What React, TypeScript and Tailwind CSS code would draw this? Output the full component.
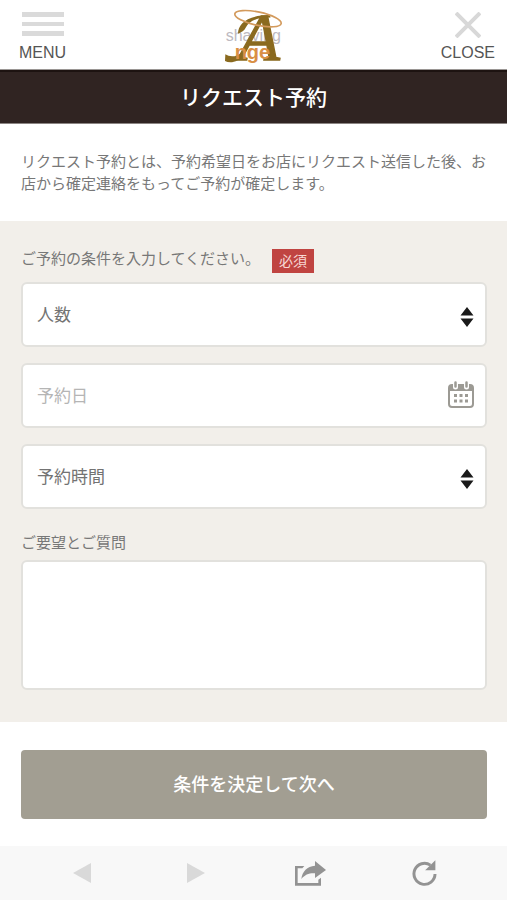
import type { ReactNode } from "react";

function Logo() {
  return (
    <svg
      viewBox="42 21 180 171"
      className="h-[57px] w-[60px] overflow-visible"
      role="img"
      aria-label="shaving Ange"
    >
      <text x="50" y="119" fontSize="48" fill="#bdb9c0" fontFamily="Liberation Sans, Arial, sans-serif">
        shaving
      </text>
      <text
        x="88"
        y="176"
        fontSize="204"
        fontStyle="italic"
        fill="#8a6a1f"
        stroke="#8a6a1f"
        strokeWidth="4"
        fontFamily="Liberation Serif, Times New Roman, serif"
      >
        A
      </text>
      {/* flourishes */}
      <path d="M87 98C87 68 116 42 184 42L184 50C142 48 120 62 110 80C106 89 98 93 87 98Z" fill="#8a6a1f" />
      <path d="M49 160C62 168 82 170 100 152L108 158C88 184 64 188 48 180Z" fill="#8a6a1f" />
      <ellipse
        cx="147"
        cy="53"
        rx="71"
        ry="20"
        transform="rotate(12 147 53)"
        fill="none"
        stroke="#d39a5c"
        strokeWidth="5"
      />
      <text
        x="77"
        y="175"
        fontSize="60"
        fontWeight="700"
        fill="#d98f45"
        fontFamily="Liberation Sans, Arial, sans-serif"
      >
        nge
      </text>
    </svg>
  );
}

function SelectField({ id, label }: { id: string; label: string }) {
  return (
    <div className="relative">
      <select
        id={id}
        aria-label={label}
        defaultValue=""
        className="block h-[65px] w-full appearance-none rounded-md border-2 border-[#e2e1dd] bg-white px-3.5 pt-0.5 text-[17px] text-[#737373]"
      >
        <option value="">{label}</option>
      </select>
      <svg
        viewBox="0 0 14 20"
        className="pointer-events-none absolute top-[25px] right-[13px] h-5 w-3.5 fill-[#1a1a1a]"
        aria-hidden="true"
      >
        <path d="M7 0L13.500 8.500H.5ZM7 20L.5 11.500h13Z" />
      </svg>
    </div>
  );
}

function ToolButton({ label, children }: { label: string; children: ReactNode }) {
  return (
    <button type="button" aria-label={label} className="flex h-full flex-1 items-center justify-center">
      {children}
    </button>
  );
}

export default function App() {
  return (
    <div className="flex min-h-screen flex-col bg-white font-['Liberation_Sans','Noto_Sans_CJK_JP',sans-serif] text-[#777]">
      <header className="flex h-[70px] items-start justify-between border-b border-[#9a9694] pr-3 pl-[19px]">
        <button type="button" className="flex flex-col items-center pt-3 text-base leading-5 text-[#555]">
          <svg viewBox="0 0 42 26" className="h-[26px] w-[42px] fill-[#dadada]" aria-hidden="true">
            <path d="M0 0h42v5H0zM0 10h42v4H0zM0 19h42v5H0z" />
          </svg>
          <span className="mt-[5px]">MENU</span>
        </button>
        <div className="pt-2">
          <Logo />
        </div>
        <button type="button" className="flex flex-col items-center pt-3 text-base leading-5 text-[#555]">
          <svg viewBox="0 0 26 26" className="size-[26px] stroke-[#d8d8d8]" aria-hidden="true">
            <path d="M1 1L25 25M25 1L1 25" strokeWidth="4" />
          </svg>
          <span className="mt-[5px]">CLOSE</span>
        </button>
      </header>

      <h1 className="flex h-[54px] items-center justify-center border-t-2 border-b border-t-[#1d1311] border-b-[#8b8583] bg-[#302422] text-[21px] font-medium text-white">
        リクエスト予約
      </h1>

      <p className="pt-[27px] pr-5 pb-[26px] pl-[21px] text-[15px] leading-[22px]">
        リクエスト予約とは、予約希望日をお店にリクエスト送信した後、お店から確定連絡をもってご予約が確定します。
      </p>

      <form className="flex flex-col">
        <div className="bg-[#f2efea] pt-7 pr-5 pb-8 pl-[21px]">
          <div className="mb-[9px] flex items-start">
            <label htmlFor="people" className="w-[251px] text-[15px] leading-5">
              ご予約の条件を入力してください。
            </label>
            <span className="bg-[#c04441] px-[7px] text-sm leading-6 text-[#f8d9d5]">必須</span>
          </div>

          <div className="flex flex-col gap-4">
            <SelectField id="people" label="人数" />
            <div className="relative">
              <input
                type="text"
                aria-label="予約日"
                placeholder="予約日"
                className="block h-[65px] w-full rounded-md border-2 border-[#e2e1dd] bg-white px-3.5 pt-0.5 text-[17px] placeholder:text-[#b5b5b5]"
              />
              <svg
                viewBox="0 0 26 28"
                className="pointer-events-none absolute top-[18px] right-[13px] h-7 w-[26px]"
                aria-hidden="true"
              >
                <rect x="1" y="4" width="24" height="22" rx="3" fill="none" stroke="#9c9a94" strokeWidth="2" />
                <path d="M1 5h24v5H1z" fill="#9c9a94" />
                <path d="M7.500 2v4M18.500 2v4" stroke="#fff" strokeWidth="5" strokeLinecap="round" />
                <path d="M7.500 1.500v4M18.500 1.500v4" stroke="#9c9a94" strokeWidth="2.500" strokeLinecap="round" />
                <path
                  d="M6 13h3v3H6zM11.500 13h3v3h-3zM17 13h3v3h-3zM6 18.500h3v3H6zM11.500 18.500h3v3h-3zM17 18.500h3v3h-3z"
                  fill="#9c9a94"
                />
              </svg>
            </div>
            <SelectField id="time" label="予約時間" />
          </div>

          <label htmlFor="note" className="mt-6 mb-[7px] block text-[15px] leading-5">
            ご要望とご質問
          </label>
          <textarea
            id="note"
            className="block h-[130px] w-full resize-none rounded-md border-2 border-[#e2e1dd] bg-white p-3.5 text-[17px]"
          />
        </div>

        <div className="pt-7 pr-5 pb-[27px] pl-[21px]">
          <button
            type="submit"
            className="h-[69px] w-full rounded bg-[#a29e92] text-lg font-medium text-white"
          >
            条件を決定して次へ
          </button>
        </div>
      </form>

      <nav className="mt-auto flex h-[54px] items-center bg-[#f8f8f8] px-[25px]">
        <ToolButton label="戻る">
          <svg viewBox="0 0 18 20" className="h-5 w-[18px] fill-[#d9d9d9]">
            <path d="M18 0v20L0 10Z" />
          </svg>
        </ToolButton>
        <ToolButton label="進む">
          <svg viewBox="0 0 18 20" className="h-5 w-[18px] fill-[#d9d9d9]">
            <path d="M0 0v20L18 10Z" />
          </svg>
        </ToolButton>
        <ToolButton label="共有">
          <svg viewBox="0 0 93 75" className="h-[25px] w-[31px] fill-[#939393]">
            <path d="M28 15L22 22H8V66H70V56L78 50V74H0V15Z" />
            <path d="M60 0L93 27L60 51V37C42 36 30 41 19 54C22 31 36 16 60 14Z" />
          </svg>
        </ToolButton>
        <ToolButton label="再読み込み">
          <svg viewBox="0 0 76 78" className="h-[26px] w-[25px]">
            <path d="M70 42A32 32 0 1 1 56 15" fill="none" stroke="#939393" strokeWidth="9" />
            <path d="M71 0V31H40Z" fill="#939393" />
          </svg>
        </ToolButton>
      </nav>
    </div>
  );
}
